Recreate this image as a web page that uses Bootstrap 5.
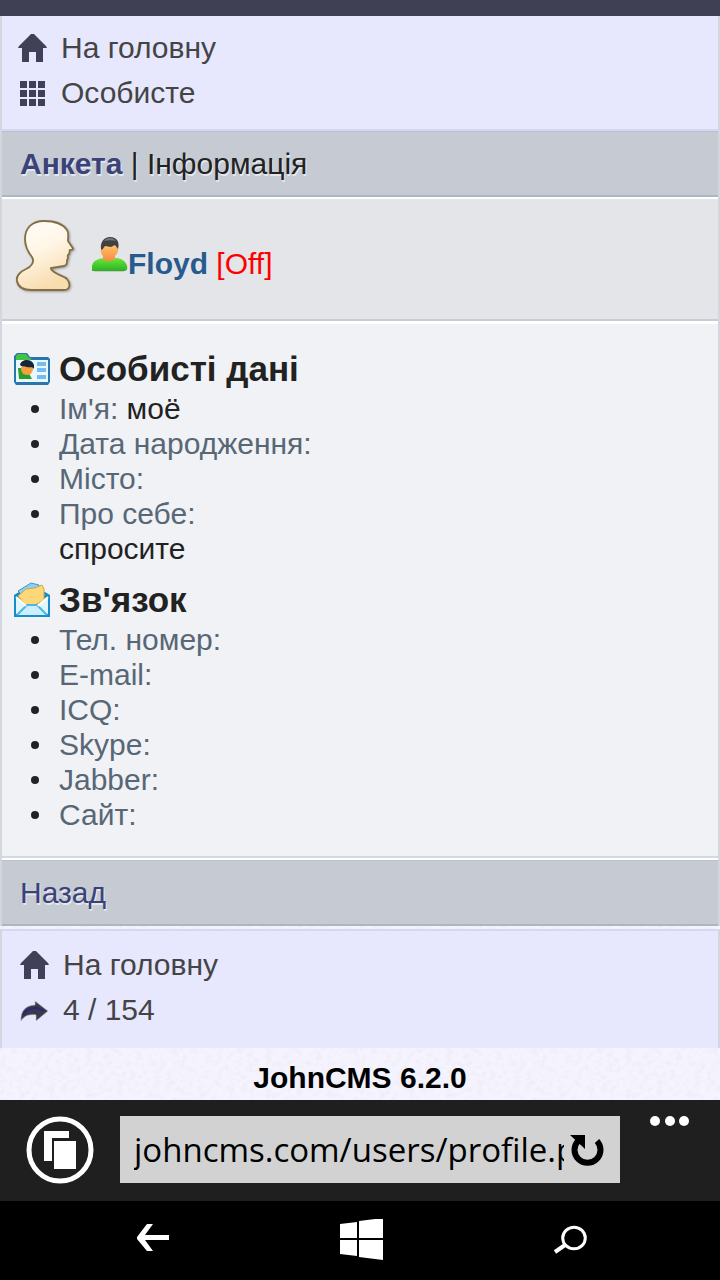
<!DOCTYPE html>
<html lang="uk">
<head>
<meta charset="utf-8">
<meta name="viewport" content="width=device-width, initial-scale=1">
<title>JohnCMS</title>
<link href="https://cdn.jsdelivr.net/npm/bootstrap@5.3.0/dist/css/bootstrap.min.css" rel="stylesheet">
<style>
  body {
    font-family: "Liberation Sans", Arial, sans-serif;
    font-size: 30px;
    line-height: 35px;
    color: #222;
    background-color: #f4f3fe;
    background-image: url("data:image/svg+xml,%3Csvg xmlns='http://www.w3.org/2000/svg' width='180' height='180'%3E%3Cfilter id='n'%3E%3CfeTurbulence type='fractalNoise' baseFrequency='.16' numOctaves='3' stitchTiles='stitch'/%3E%3CfeColorMatrix values='0 0 0 0 .8 0 0 0 0 .78 0 0 0 0 .84 1.2 0 0 0 -.55'/%3E%3C/filter%3E%3Crect width='180' height='180' filter='url(%23n)'/%3E%3C/svg%3E");
  }
  a { text-decoration: none; }
  .top-strip { height: 16px; background: #404054; }
  .framed { border-left: 2px solid #d2d6de; border-right: 2px solid #d2d6de; }
  .site-menu { background: #e7e7fe; line-height: 45px; padding: 9px 16px 14px; }
  .site-menu a { color: #444; gap: 14px; }
  .site-menu svg { width: 29px; height: 30px; fill: #404058; flex: none; }
  .menu-top { border-bottom: 2px solid #d6d7f5; }
  .menu-bottom { border-top: 2px solid #d6d7f5; margin-top: 3px; padding: 11px 18px 16px; }
  .title-bar {
    background: #c6cad2;
    border-top: 1px solid #bdc2c9;
    border-bottom: 2px solid #b0b5be;
    padding: 14px 18px;
    text-shadow: 1px 2px 0 #e4e7ee;
  }
  .title-bar a { color: #3a4278; }
  .user-row {
    background: #e3e5e8;
    border-top: 2px solid #fff;
    border-bottom: 2px solid #c7cdd5;
    padding: 20px 12px 24px;
  }
  .user-row .avatar { width: 64px; height: 76px; flex: none; }
  .user-row .person { width: 36px; height: 52px; }
  .user-name { margin-left: 14px; padding-top: 12px; }
  .user-name a { color: #285a8e; }
  .state-off { color: #f00; }
  .profile {
    background: #f0f2f5;
    border-top: 3px solid #fff;
    border-bottom: 2px solid #d5d9df;
    box-shadow: 0 2px 0 #fff;
    margin-bottom: 2px;
    padding: 22px 12px 24px;
  }
  .profile h2 { font-size: 35px; font-weight: 700; line-height: 45px; gap: 9px; }
  .profile ul + h2 { margin-top: 11px; }
  .profile h2 svg { width: 36px; height: 36px; flex: none; }
  .profile ul { padding-left: 45px; list-style: none; }
  .profile li::before {
    content: "";
    float: left;
    width: 8px;
    height: 8px;
    border-radius: 50%;
    background: #222;
    margin: 14px 0 0 -28px;
  }
  .field-label { color: #586776; }
  .copyright { color: #000; padding: 12px 0 5px; }
  .browser-bar { background: #1f1f1f; padding: 16px 30px 17px 26px; gap: 26px; }
  .browser-bar button, .phone-keys button { border: 0; background: none; padding: 0; line-height: 0; color: #fff; }
  .address { background: #d2d2d2; height: 67px; padding: 0 16px 0 14px; margin-right: 4px; }
  .address input {
    font-family: "Open Sans", "Noto Sans", sans-serif;
    font-size: 33px; line-height: 48px; color: #000;
    border: 0; background: none; padding: 0; min-width: 0; outline: 0;
  }
  .address button { color: #000; margin-left: 4px; }
  .phone-keys { background: #000; min-height: 79px; padding: 0 131px; }
</style>
</head>
<body>
<div class="d-flex flex-column min-vh-100">
  <header>
    <div class="top-strip"></div>
    <nav class="site-menu menu-top framed">
      <a href="#" class="d-flex align-items-center">
        <svg viewBox="0 0 29 30"><path d="M13 1h3l12 12 1 2h-4v14h-7v-10h-7v10H4V15H0l1-2z"/></svg>На головну</a>
      <a href="#" class="d-flex align-items-center">
        <svg viewBox="0 -1 29 30"><path d="M2 2h7v7H2zM11 2h7v7h-7zM20 2h7v7h-7zM2 11h7v7H2zM11 11h7v7h-7zM20 11h7v7h-7zM2 20h7v7H2zM11 20h7v7h-7zM20 20h7v7h-7z"/></svg>Особисте</a>
    </nav>
  </header>

  <main class="framed">
    <div class="title-bar"><a href="#" class="fw-bold">Анкета</a> | Інформація</div>

    <section class="user-row d-flex align-items-center">
      <svg class="avatar" viewBox="0 0 64 76">
        <defs>
          <linearGradient id="skin" x1="0" y1="0" x2=".4" y2="1"><stop offset="0" stop-color="#fffefa"/><stop offset=".5" stop-color="#fff6e6"/><stop offset="1" stop-color="#f8ddaf"/></linearGradient>
          <filter id="soft" x="-20%" y="-20%" width="140%" height="140%"><feDropShadow dx="1" dy="1" stdDeviation="1" flood-color="#555" flood-opacity=".5"/></filter>
        </defs>
        <path filter="url(#soft)" d="M30 2C18 2 11 9 11 20c0 7 3 13 7 18 3 5-1 10-6 12-7 3-10 8-9 12 1 6 7 9 15 9h32c6 0 7-6 3-11-4-4-12-4-16-10v-1l13-2c3-1 3-3 3-6 2-2 0-3 1-5 2-1 1-3 2-5 3 0 4-1 2-3l-4-6c0-5 1-8-1-11C49 5 42 2 30 2z" fill="url(#skin)" stroke="#846e45" stroke-width="1.800"/>
      </svg>
      <div class="user-name d-flex align-items-center">
        <svg class="person" viewBox="0 0 36 52">
          <defs><linearGradient id="shirt" x1="0" y1="0" x2="0" y2="1"><stop offset="0" stop-color="#6ee33d"/><stop offset="1" stop-color="#27b51e"/></linearGradient>
          <linearGradient id="face" x1="0" y1="0" x2="0" y2="1"><stop offset="0" stop-color="#ffc36b"/><stop offset="1" stop-color="#f78b3d"/></linearGradient></defs>
          <path d="M0 29c1-5 5-7 11-8h14c6 1 9 4 10 8 1 4-1 5-3 5H0z" fill="url(#shirt)"/>
          <path d="M2 34h30" stroke="#777" stroke-opacity=".5"/>
          <path d="M11 8h14c3 5 0 9-2 11v3c-4 3-8 3-12 0v-3C8 16 8 11 11 8z" fill="url(#face)"/>
          <path d="M9 12C8 5 12 0 18 0c7 0 10 5 8 12l-3-4-4 2-6-1-3 4z" fill="#414141"/><path d="M12 4c3-4 9-4 12 0-4-1-8-1-12 0z" fill="#777"/>
        </svg>
        <span><a href="#" class="fw-bold">Floyd</a> <span class="state-off">[Off]</span></span>
      </div>
    </section>

    <section class="profile">
      <h2 class="d-flex align-items-center mb-0">
        <svg viewBox="0 0 36 36"><path d="M0 5l3-3h10l3 4h18l2 2v23l-2 3H2l-2-3z" fill="#2876ae"/><path d="M2 5l2-2h8l3 4h2v3H2z" fill="#43c244"/><path d="M2 9h32v22H2z" fill="#e9f7ff"/><path d="M4 17h8l6 11H5z" fill="#2d9d2b"/><circle cx="13" cy="18" r="6" fill="#f3a13c"/><path d="M6 14c1-6 12-7 14 0v4c-2-3-5-1-7-2-3-1-5 0-7-2z" fill="#14263b"/><path d="M23 11h9v4h-9zM23 17h9v4h-9zM23 24h9v4h-9z" fill="#75bdf1"/></svg>
        Особисті дані</h2>
      <ul class="mb-0">
        <li><span class="field-label">Ім'я:</span> моё</li>
        <li><span class="field-label">Дата народження:</span></li>
        <li><span class="field-label">Місто:</span></li>
        <li><span class="field-label">Про себе:</span><br>спросите</li>
      </ul>
      <h2 class="d-flex align-items-center mb-0">
        <svg viewBox="0 0 36 36"><path d="M0 13l5-3h26l5 3v22H0z" fill="#168cc8"/><path d="M2 15l16 8 16-8v17H2z" fill="#dff5ff"/><path d="M4 9L17 1l8 2-2 9H7z" fill="#8dcef1" stroke="#3b9acb"/><path d="M4 14l8-7 9-1 7-3 2 4v11l-9 5H11z" fill="#ffd77b" stroke="#cfa546"/><path d="M3 33l10-10h10l10 10" fill="#cceefe" stroke="#4ab6e2" stroke-width="2"/><path d="M2 15l10 9M34 15l-10 9" stroke="#fff" stroke-width="2"/></svg>
        Зв'язок</h2>
      <ul class="mb-0">
        <li><span class="field-label">Тел. номер:</span></li>
        <li><span class="field-label">E-mail:</span></li>
        <li><span class="field-label">ICQ:</span></li>
        <li><span class="field-label">Skype:</span></li>
        <li><span class="field-label">Jabber:</span></li>
        <li><span class="field-label">Сайт:</span></li>
      </ul>
    </section>

    <div class="title-bar"><a href="#">Назад</a></div>
  </main>

  <nav class="site-menu menu-bottom framed">
    <a href="#" class="d-flex align-items-center">
      <svg viewBox="0 0 29 30"><path d="M13 1h3l12 12 1 2h-4v14h-7v-10h-7v10H4V15H0l1-2z"/></svg>На головну</a>
    <a href="#" class="d-flex align-items-center">
      <svg viewBox="0 0 29 30"><path d="M1 26C0 16 6 10 15 10V6l13 10-12 10v-6C9 19 4 21 1 26z" fill="#3b3950" stroke="#c9c6c9" stroke-width=".6"/><path d="M3 20c4-6 8-7 14-7l7 3" fill="none" stroke="#272b70" stroke-width="2"/></svg>4 / 154</a>
  </nav>
  <div class="copyright text-center fw-bold">JohnCMS 6.2.0</div>

  <footer class="mt-auto">
    <div class="browser-bar d-flex align-items-start">
      <button type="button" aria-label="Вкладки">
        <svg width="68" height="68" viewBox="0 0 68 68"><circle cx="34" cy="34" r="31" fill="none" stroke="#fff" stroke-width="5"/><path d="M18 15h25v7H26v23h-8zM28 25h22v28H28z" fill="#fff"/></svg>
      </button>
      <form class="address d-flex align-items-center flex-grow-1">
        <input type="text" class="flex-grow-1" aria-label="Адреса" value="johncms.com/users/profile.php">
        <button type="button" aria-label="Оновити">
          <svg width="36" height="36" viewBox="0 0 36 36"><path d="M29 9A13 13 0 1 1 10 9" fill="none" stroke="#000" stroke-width="6"/><path d="M2 3h15v14z"/></svg>
        </button>
      </form>
      <button type="button" aria-label="Меню">
        <svg width="40" height="10" viewBox="0 0 40 10"><g fill="#fff"><circle cx="5" cy="5" r="5"/><circle cx="20" cy="5" r="5"/><circle cx="34" cy="5" r="5"/></g></svg>
      </button>
    </div>
    <div class="phone-keys d-flex align-items-center justify-content-between">
      <button type="button" aria-label="Назад">
        <svg width="44" height="44" viewBox="0 1 44 44"><path d="M6 19L16 6h6L14 17h24v5H14l8 11h-6L6 21z" fill="#fff"/></svg>
      </button>
      <button type="button" aria-label="Пуск">
        <svg width="48" height="44" viewBox="-4 2 48 44"><path d="M0 7l17-2v16H0zM19 4l24-3v20H19zM0 23h17v16L0 37zM19 23h24v20l-24-3z" fill="#fff"/></svg>
      </button>
      <button type="button" aria-label="Пошук">
        <svg width="44" height="44" viewBox="0 1 44 44"><ellipse cx="29" cy="20" rx="11.300" ry="10.800" fill="none" stroke="#fff" stroke-width="3"/><path d="M20 27L10 34" stroke="#fff" stroke-width="4"/></svg>
      </button>
    </div>
  </footer>
</div>
<script src="https://cdn.jsdelivr.net/npm/bootstrap@5.3.0/dist/js/bootstrap.bundle.min.js"></script>
</body>
</html>
